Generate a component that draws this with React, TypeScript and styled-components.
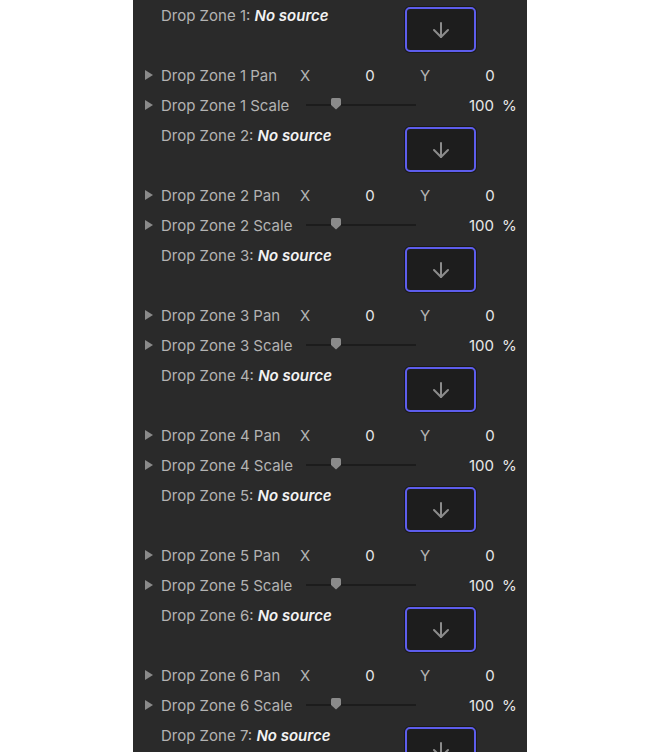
import styled, { createGlobalStyle } from "styled-components";

const GlobalStyle = createGlobalStyle`
  body {
    margin: 0;
    background: #ffffff;
    font-family: Inter, "Liberation Sans", sans-serif;
  }
`;

const Panel = styled.div`
  width: 394px;
  margin: 0 auto;
  min-height: 100vh;
  background: #2a2a2a;
  overflow: hidden;
`;

const Zone = styled.div`
  display: flex;
  flex-direction: column;
`;

const HeaderRow = styled.div`
  display: flex;
  height: 60px;
  padding-left: 28px;
`;

const HeaderLabel = styled.div`
  width: 244px;
  height: 30px;
  line-height: 31px;
  font-size: 15px;
  color: #b3b3b3;
  white-space: nowrap;
`;

const Source = styled.span`
  color: #f2f2f2;
  font-weight: 600;
  font-style: italic;
`;

const DropBox = styled.div`
  margin-top: 7px;
  width: 71px;
  height: 45px;
  box-sizing: border-box;
  border: 2px solid #5d5dec;
  border-radius: 5px;
  background: #1d1d1d;
  box-shadow: 0 0 0 1px #1a1a1a;
  display: flex;
  align-items: center;
  justify-content: center;
`;

const Row = styled.div`
  display: flex;
  align-items: center;
  height: 30px;
  padding-left: 12px;
  font-size: 15px;
  color: #b3b3b3;
`;

const Disclosure = styled.span`
  width: 0;
  height: 0;
  border-top: 5px solid transparent;
  border-bottom: 5px solid transparent;
  border-left: 8px solid #8a8a8a;
  margin-right: 8px;
`;

const RowLabel = styled.div`
  width: 139px;
  white-space: nowrap;
`;

const Axis = styled.div<{ $w: number; $pad?: number }>`
  box-sizing: border-box;
  width: ${(p) => p.$w}px;
  padding-left: ${(p) => p.$pad ?? 0}px;
  color: #b3b3b3;
`;

const Num = styled.div<{ $w: number; $align?: string }>`
  width: ${(p) => p.$w}px;
  text-align: ${(p) => p.$align ?? "center"};
  color: #e8e8e8;
`;

const Track = styled.div`
  position: relative;
  margin-left: 6px;
  width: 110px;
  height: 2px;
  background: #1c1c1c;
`;

const Thumb = styled.svg`
  position: absolute;
  left: 24px;
  top: -6px;
`;

const Unit = styled.div`
  margin-left: 8px;
  color: #e8e8e8;
`;

function ArrowDown() {
  return (
    <svg width="24" height="24" viewBox="0 0 24 24" fill="none" stroke="#8c8c8c" strokeWidth="2" strokeLinecap="round" strokeLinejoin="round">
      <path d="M12 5v14" />
      <path d="m19 12-7 7-7-7" />
    </svg>
  );
}

function DropZone({ n }: { n: number }) {
  return (
    <Zone>
      <HeaderRow>
        <HeaderLabel>
          Drop Zone {n}: <Source>No source</Source>
        </HeaderLabel>
        <DropBox>
          <ArrowDown />
        </DropBox>
      </HeaderRow>
      <Row>
        <Disclosure />
        <RowLabel>Drop Zone {n} Pan</RowLabel>
        <Axis $w={50}>X</Axis>
        <Num $w={40}>0</Num>
        <Axis $w={80} $pad={30}>Y</Axis>
        <Num $w={40}>0</Num>
      </Row>
      <Row>
        <Disclosure />
        <RowLabel>Drop Zone {n} Scale</RowLabel>
        <Track>
          <Thumb width="12" height="12" viewBox="0 0 12 12">
            <path d="M1 1.5 Q1 0 2.5 0 H9.5 Q11 0 11 1.5 V7 L6 11.5 L1 7 Z" fill="#8a8a8a" />
          </Thumb>
        </Track>
        <Num $w={78} $align="right">100</Num>
        <Unit>%</Unit>
      </Row>
    </Zone>
  );
}

export default function App() {
  return (
    <>
      <GlobalStyle />
      <Panel>
        {[1, 2, 3, 4, 5, 6, 7].map((n) => (
          <DropZone key={n} n={n} />
        ))}
      </Panel>
    </>
  );
}
